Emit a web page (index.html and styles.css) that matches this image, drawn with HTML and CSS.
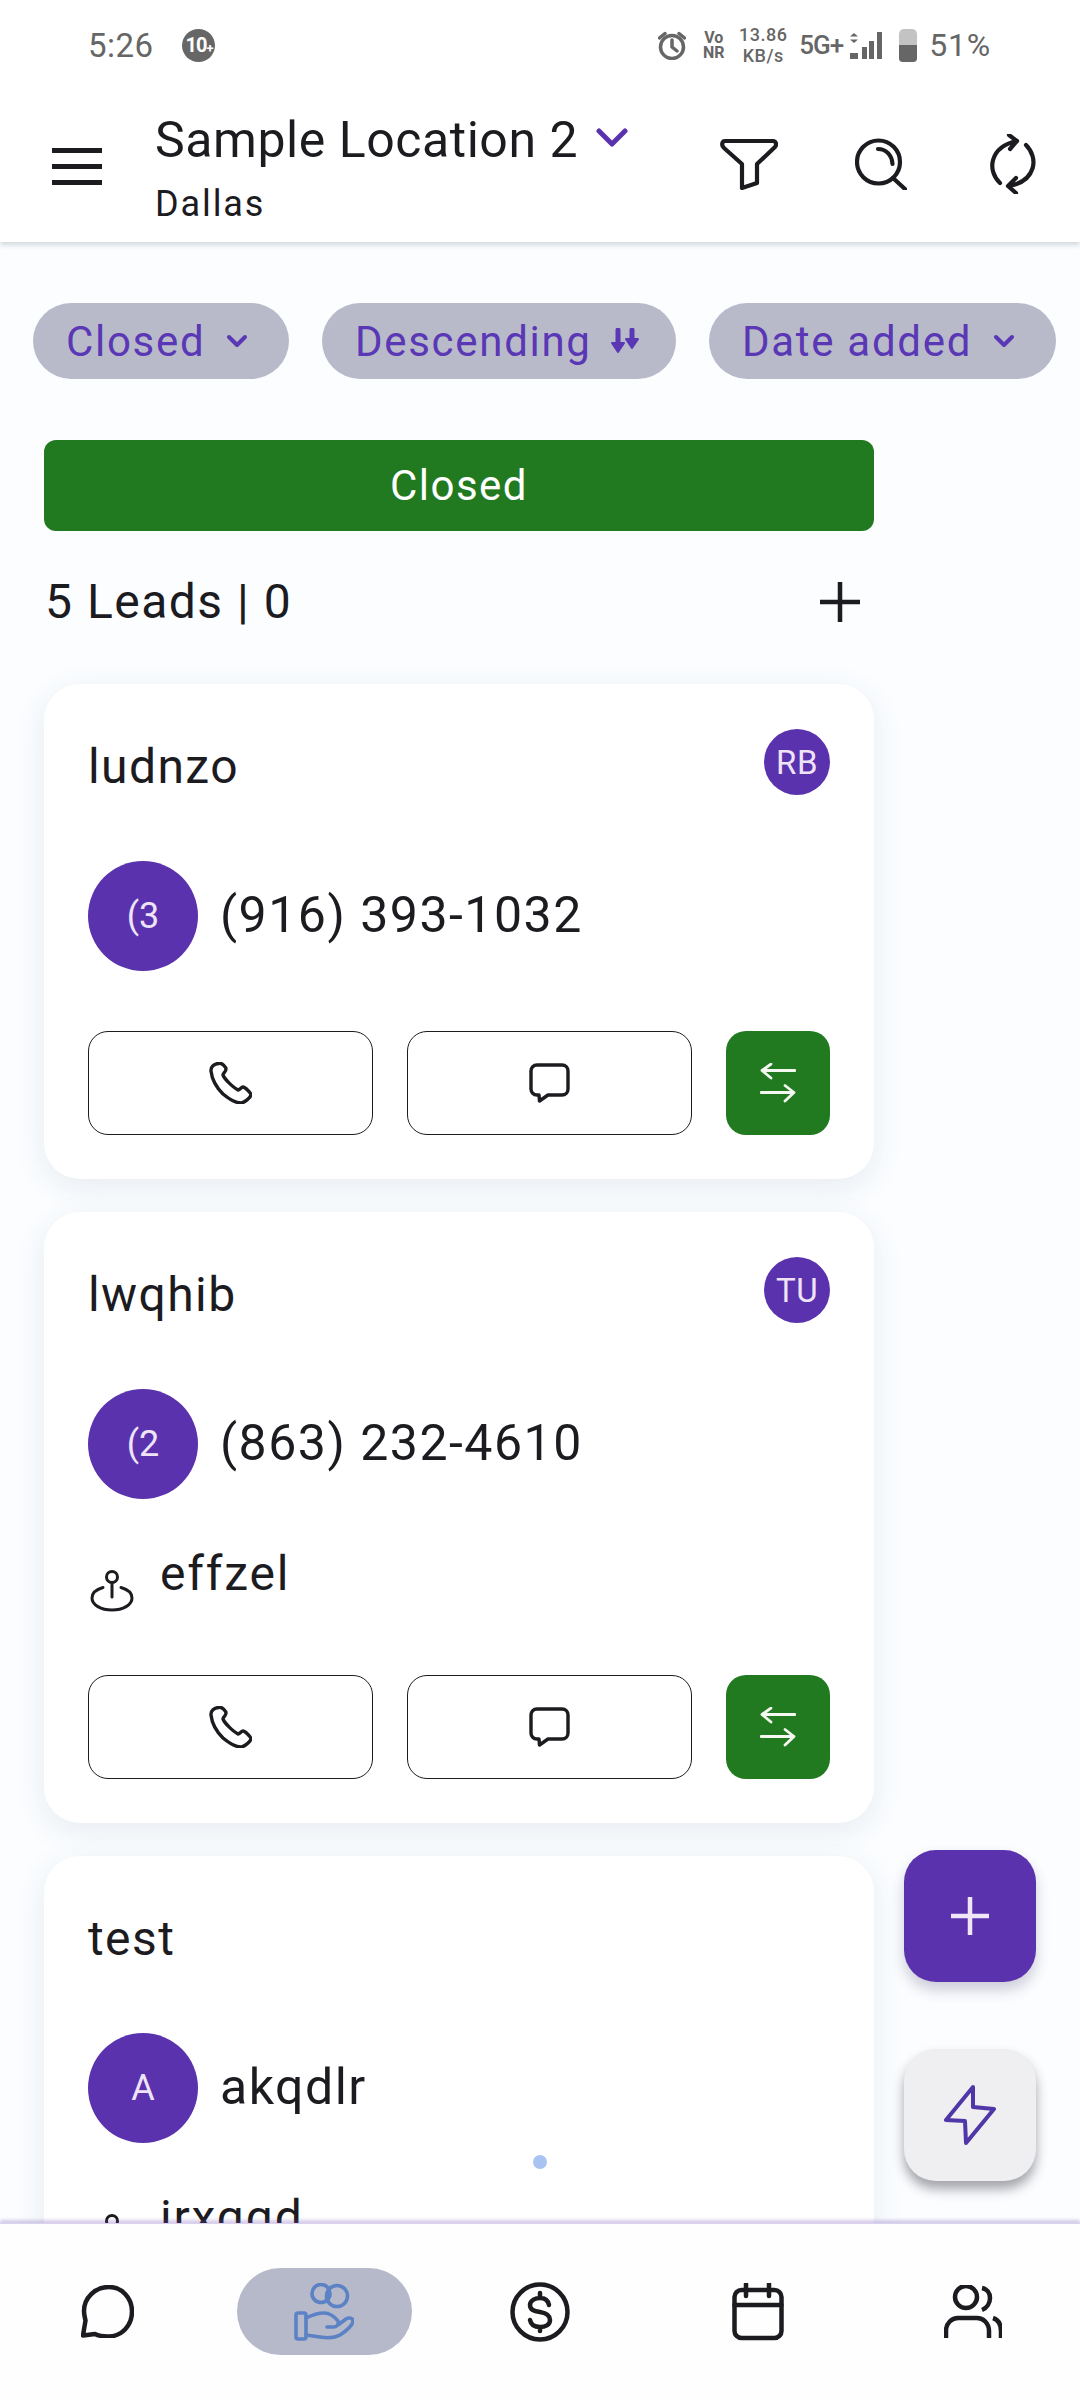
FILE: index.html
```html
<!DOCTYPE html>
<html lang="en">
<head>
<meta charset="utf-8">
<title>Leads</title>
<link rel="stylesheet" href="styles.css">
</head>
<body>
<svg class="defs" width="0" height="0" aria-hidden="true">
  <symbol id="i-phone" viewBox="0 0 43 42"><path d="M10 1.500C5 1.500 1.500 5 2 9c1 9 5 16 12 23 6 5 13 9 18 9 3 0 9-5 10-8 0-2-6-8-8-8-2 0-3 3-5 3-4-2-13-10-15-15 0-2 3-3 3-6 0-2-4-6-7-6z"/></symbol>
  <symbol id="i-msg" viewBox="0 0 41 40"><path d="M8 2h25c3.500 0 6 2.500 6 6v18c0 3.500-2.500 6-6 6H19l-8.500 6-.5-6H8c-3.500 0-6-2.500-6-6V8c0-3.500 2.500-6 6-6z"/></symbol>
  <symbol id="i-swap" viewBox="0 0 36 40"><path d="M35 7.500H2M11 1 2 7.500 11 15M1 29.500h33M25 22.500l9 7-9 8.500"/></symbol>
  <symbol id="i-pin" viewBox="0 0 44 42"><circle cx="22" cy="7" r="5.500"/><path d="M22 12.500V27M13 17.500C6 19.500 2 23.500 2 28c0 7 9 12 20 12s20-5 20-12c0-4.500-4-8.500-11-10.500"/></symbol>
</svg>

<div class="app">
  <header class="top">
    <div class="status">
      <div class="status-left">
        <span class="clock">5:26</span>
        <span class="badge">10<span class="badge-plus">+</span></span>
      </div>
      <div class="status-right">
        <svg class="st-alarm" viewBox="0 0 28 29"><circle cx="14" cy="16" r="11.500"/><path d="M14 9v7l5 4M1.500 7 7 2.500M26.500 7 21 2.500"/></svg>
        <span class="st-vo"><span>Vo</span><span>NR</span></span>
        <span class="st-speed"><span>13.86</span><span>KB/s</span></span>
        <span class="st-5g">5G+</span>
        <svg class="st-signal" viewBox="0 0 33 27"><path class="fill" d="M1 4.500 5 1l4 3.500zM1 7.500h8L5 11zM1 21h8v6H1zM13 15h5v12h-5zM20 9h5v18h-5zM28 0h5v27h-5z"/></svg>
        <span class="st-batt"><span class="st-batt-fill"></span></span>
        <span class="st-pct">51%</span>
      </div>
    </div>
    <div class="appbar">
      <div class="burger"><span></span><span></span><span></span></div>
      <div class="loc">
        <div class="loc-name">Sample Location 2
          <svg class="loc-chev" viewBox="0 0 32 20"><path d="M3 3l13 13L29 3"/></svg>
        </div>
        <div class="loc-city">Dallas</div>
      </div>
      <div class="bar-actions">
        <svg class="ic-filter" viewBox="0 0 58 52"><path d="M5 3h48c3 0 4 3.500 2 6L37 26v19l-15 5V26L4 10C1 7.500 2 3 5 3z"/></svg>
        <svg class="ic-search" viewBox="0 0 52 52"><circle cx="23.500" cy="24" r="21.500"/><path d="M38 40l12 11M23 11c8 0 14 6 14.500 15"/></svg>
        <svg class="ic-refresh" viewBox="0 0 56 60"><path d="M15 49C2 37 4 13 32 7M24 1l8 6-7 8M41 11c13 13 10 36-17 41M31 44l-8 8 8 7"/></svg>
      </div>
    </div>
  </header>

  <main class="content">
    <div class="pills">
      <div class="pill pill-a">Closed
        <svg class="pill-chev" viewBox="0 0 22 14"><path d="M3 3l8 8 8-8"/></svg>
      </div>
      <div class="pill pill-b">Descending
        <svg class="pill-sort" viewBox="0 0 29 27"><path d="M8 2v16M22 2v12"/><path class="sort-head" d="M2 15h12l-6 9zM16 11h12l-6 9z"/></svg>
      </div>
      <div class="pill pill-c">Date added
        <svg class="pill-chev" viewBox="0 0 22 14"><path d="M3 3l8 8 8-8"/></svg>
      </div>
    </div>

    <div class="column">
      <div class="col-head">Closed</div>
      <div class="col-count">
        <span>5 Leads | 0</span>
        <svg class="col-plus" viewBox="0 0 40 40"><path d="M20 0v40M0 20h40"/></svg>
      </div>

      <article class="card">
        <div class="card-top"><span class="card-name">ludnzo</span><span class="mini-av">RB</span></div>
        <div class="contact"><span class="big-av">(3</span><span class="contact-text">(916) 393-1032</span></div>
        <div class="actions">
          <button class="act"><svg class="act-phone"><use href="#i-phone"/></svg></button>
          <button class="act"><svg class="act-msg"><use href="#i-msg"/></svg></button>
          <button class="act-green"><svg class="act-swap"><use href="#i-swap"/></svg></button>
        </div>
      </article>

      <article class="card">
        <div class="card-top"><span class="card-name">lwqhib</span><span class="mini-av">TU</span></div>
        <div class="contact"><span class="big-av">(2</span><span class="contact-text">(863) 232-4610</span></div>
        <div class="place"><svg class="pin"><use href="#i-pin"/></svg><span class="place-text">effzel</span></div>
        <div class="actions">
          <button class="act"><svg class="act-phone"><use href="#i-phone"/></svg></button>
          <button class="act"><svg class="act-msg"><use href="#i-msg"/></svg></button>
          <button class="act-green"><svg class="act-swap"><use href="#i-swap"/></svg></button>
        </div>
      </article>

      <article class="card">
        <div class="card-top"><span class="card-name">test</span></div>
        <div class="contact"><span class="big-av">A</span><span class="contact-text">akqdlr</span></div>
        <div class="place"><svg class="pin"><use href="#i-pin"/></svg><span class="place-text">irxqqd</span></div>
      </article>
    </div>

    <span class="scroll-dot"></span>
    <button class="fab fab-add"><svg viewBox="0 0 38 38"><path d="M19 0v38M0 19h38"/></svg></button>
    <button class="fab fab-bolt"><svg viewBox="0 0 52 60"><path d="M29 2 2 35l19 1 1 22 28-34-21-2z"/></svg></button>
  </main>

  <nav class="nav">
    <div class="nav-item">
      <svg class="nv-chat" viewBox="0 0 53 53"><path d="M28 2C14 2 3 13 3 26c0 4 1 7 1.500 9.500L2 50.500 14 49c4 2 8 2.500 13 2.500 14 0 24-11 24-25C51 13 41 2 28 2z"/></svg>
    </div>
    <div class="nav-item nav-active">
      <svg class="nv-hand" viewBox="0 0 60 58"><circle cx="27" cy="10.500" r="9"/><circle cx="43" cy="13" r="10.500"/><rect x="2" y="30" width="10" height="26" rx="2"/><path d="M12 35c6-3 12-5 18-5 5 0 10 3 14 8 1 3-1 6-4 6h-7M44 42l8-6c3-2 7-1 7 2 0 3-5 9-13 14-7 4-14 3-20 2l-14-2"/></svg>
    </div>
    <div class="nav-item">
      <svg class="nv-dollar" viewBox="0 0 60 60"><circle cx="30" cy="30" r="27.500"/><path d="M39 23c-1-5-5-7-9-7s-10 2-10 7c0 5 4 6 10 7 6 1 10 3 10 8s-5 7-10 7-9-2-10-7M30 11v5M30 45v4"/></svg>
    </div>
    <div class="nav-item">
      <svg class="nv-cal" viewBox="0 0 52 58"><rect x="2.500" y="7" width="47" height="48" rx="7"/><path d="M2.500 22h47M14 1v12M37 1v12"/></svg>
    </div>
    <div class="nav-item">
      <svg class="nv-people" viewBox="0 0 58 54"><circle cx="22" cy="12" r="11"/><path d="M2 53v-7c0-8 6-13 12-13h19c6 0 12 5 12 13v7M38 3c5 1 8 5 8 10s-3 10-8 12M49 33c6 2 8 7 8 13v7"/></svg>
    </div>
  </nav>
</div>
</body>
</html>
```
FILE: styles.css
```css
* { box-sizing: border-box; margin: 0; padding: 0; }
html, body { width: 1080px; height: 2400px; overflow: hidden; background: #fbfdff; }
body { font-family: Roboto, "Liberation Sans", sans-serif; color: #1c1b1f; }
button { border: 0; background: none; font: inherit; }
.defs { position: absolute; }
svg { fill: none; stroke-linecap: round; stroke-linejoin: round; display: block; }

.app { width: 1080px; height: 2400px; display: flex; flex-direction: column; }

/* header */
.top { height: 242px; background: #fff; flex: none; box-shadow: 0 3px 5px rgba(70, 90, 95, .22); position: relative; z-index: 3; }
.status { height: 90px; display: flex; justify-content: space-between; align-items: center; padding: 0 89px 0 88px; color: #666; }
.status-left { display: flex; align-items: center; gap: 28px; }
.clock { font-size: 33px; width: 66px; letter-spacing: .5px; }
.badge { width: 33px; height: 33px; border-radius: 50%; background: #666; color: #fff; font-size: 20px; font-weight: 700; letter-spacing: -1px; display: flex; align-items: center; justify-content: center; padding-left: 2px; }
.badge-plus { font-size: 13px; margin-top: 7px; letter-spacing: 0; }
.status-right { display: flex; align-items: center; }
.st-alarm { width: 28px; height: 29px; stroke: #666; stroke-width: 3.500; margin-right: 15px; }
.st-vo { display: flex; flex-direction: column; align-items: center; width: 25px; margin-right: 12px; font-size: 16px; font-weight: 700; line-height: 15px; }
.st-speed { display: flex; flex-direction: column; align-items: center; width: 50px; margin-right: 11px; font-size: 18px; font-weight: 500; line-height: 21px; letter-spacing: .5px; }
.st-5g { font-size: 26px; width: 44px; margin-right: 6px; font-weight: 500; letter-spacing: -1px; }
.st-signal { width: 33px; height: 27px; margin-right: 17px; }
.st-signal .fill { fill: #666; stroke: none; }
.st-batt { width: 18px; height: 33px; border-radius: 5px 5px 4px 4px; background: #c3c3c3; display: flex; align-items: flex-end; margin-right: 12px; overflow: hidden; }
.st-batt-fill { width: 100%; height: 17px; background: #666; }
.st-pct { font-size: 32px; letter-spacing: .8px; }

.appbar { height: 152px; display: flex; align-items: flex-start; padding-left: 52px; position: relative; }
.burger { width: 50px; margin-top: 58px; display: flex; flex-direction: column; gap: 11px; }
.burger span { height: 5px; background: #1c1b1f; }
.loc { margin-left: 53px; }
.loc-name { font-size: 50px; line-height: 60px; margin-top: 20px; display: flex; align-items: center; letter-spacing: .55px; }
.loc-chev { width: 32px; height: 20px; margin: -4px 0 0 18px; stroke: #5a32ae; stroke-width: 5; }
.loc-city { font-size: 36px; line-height: 44px; margin-top: 12px; letter-spacing: 1.900px; }
.bar-actions { position: absolute; left: 720px; top: 44px; display: flex; align-items: center; }
.bar-actions svg { stroke: #1c1b1f; stroke-width: 4.200; flex: none; }
.ic-filter { width: 58px; height: 52px; margin-right: 77px; }
.ic-search { width: 52px; height: 52px; margin-right: 77px; }
.ic-refresh { width: 58px; height: 60px; }

/* main */
.content { flex: 1; min-height: 0; overflow: hidden; position: relative; }
.pills { display: flex; gap: 33px; padding: 61px 0 0 33px; }
.pill { height: 76px; border-radius: 38px; background: #b8bac9; color: #5a37b5; font-size: 42px; letter-spacing: 1.700px; display: flex; align-items: center; white-space: nowrap; padding-left: 33px; }
.pill-a { width: 256px; }
.pill-b { width: 354px; }
.pill-c { width: 347px; }
.pill-chev { width: 22px; height: 14px; stroke: #5a37b5; stroke-width: 4; margin-left: 21px; }
.pill-sort { width: 29px; height: 27px; stroke: #5a37b5; stroke-width: 5; margin-left: 18px; }
.sort-head { fill: #5a37b5; stroke-width: 2; }

.column { width: 830px; margin: 61px 0 0 44px; }
.col-head { height: 91px; border-radius: 12px; background: #227a20; color: #fff; font-size: 42px; letter-spacing: 1.500px; display: flex; align-items: center; justify-content: center; }
.col-count { display: flex; justify-content: space-between; align-items: center; height: 60px; margin-top: 40px; padding: 0 14px 0 1px; font-size: 48px; letter-spacing: 1.500px; }
.col-plus { width: 40px; height: 40px; stroke: #1c1b1f; stroke-width: 4.500; margin-top: 1px; }
.col-plus path { stroke-linecap: butt; }

.card { background: #fff; border-radius: 36px; padding: 45px 44px 44px; margin-bottom: 33px; box-shadow: 0 8px 30px rgba(60, 85, 120, .1); }
.col-count + .card { margin-top: 53px; }
.card-top { display: flex; justify-content: space-between; align-items: center; height: 66px; }
.card-name { font-size: 48px; letter-spacing: 1.400px; margin: 9px 0 0; }
.mini-av { width: 66px; height: 66px; border-radius: 50%; background: #5a32ae; color: #efe3f7; font-size: 33px; display: flex; align-items: center; justify-content: center; letter-spacing: .5px; }
.contact { display: flex; align-items: center; gap: 22px; height: 110px; margin-top: 66px; }
.big-av { width: 110px; height: 110px; border-radius: 50%; background: #5a32ae; color: #efe3f7; font-size: 36px; display: flex; align-items: center; justify-content: center; flex: none; }
.contact-text { font-size: 50px; letter-spacing: 1.500px; margin-top: -2px; }
.place { display: flex; align-items: flex-start; height: 56px; margin-top: 60px; }
.pin { width: 44px; height: 42px; margin: 11px 0 0 2px; stroke: #1c1b1f; stroke-width: 3; flex: none; }
.place-text { font-size: 48px; line-height: 30px; letter-spacing: 1.800px; margin-left: 26px; }
.actions { display: flex; gap: 34px; margin-top: 60px; height: 104px; }
.act { width: 285px; border: 1.500px solid #1c1b1f; border-radius: 20px; background: #fff; display: flex; align-items: center; justify-content: center; }
.act-phone { width: 43px; height: 42px; stroke: #1c1b1f; stroke-width: 3.400; }
.act-msg { width: 41px; height: 40px; stroke: #1c1b1f; stroke-width: 3.400; }
.act-green { width: 104px; border-radius: 20px; background: #227a20; display: flex; align-items: center; justify-content: center; }
.act-swap { width: 36px; height: 40px; stroke: #f4f8f1; stroke-width: 2.800; }

.scroll-dot { position: absolute; left: 533px; top: 1913px; width: 14px; height: 14px; border-radius: 50%; background: #a9c3f3; }
.fab { position: absolute; left: 904px; width: 132px; height: 132px; border-radius: 32px; display: flex; align-items: center; justify-content: center; }
.fab-add { top: 1608px; background: #5a32ae; box-shadow: 0 8px 14px rgba(60, 50, 90, .24); }
.fab-add svg { width: 38px; height: 38px; stroke: #f1e6f8; stroke-width: 4.500; }
.fab-add path { stroke-linecap: butt; }
.fab-bolt { top: 1807px; background: #efeef0; box-shadow: 0 8px 12px rgba(40, 40, 50, .42); }
.fab-bolt svg { width: 52px; height: 60px; stroke: #4f37a8; stroke-width: 4; }

/* nav */
.nav { height: 177px; flex: none; background: #fefefe; border-top: 1px solid #dcd2ee; box-shadow: 0 -3px 3px rgba(110, 80, 180, .28); position: relative; z-index: 2; display: grid; grid-template-columns: repeat(5, 216px); justify-items: center; align-items: start; padding-top: 44px; }
.nav-item { height: 87px; display: flex; align-items: center; justify-content: center; }
.nav-item svg { stroke: #1c1b1f; stroke-width: 4.500; }
.nav-active { width: 175px; border-radius: 44px; background: #b5b9c9; }
.nav-active svg { stroke: #5c82c6; stroke-width: 3.600; }
.nv-chat { width: 53px; height: 53px; margin-left: -1px; }
.nv-hand { width: 60px; height: 58px; margin-left: 0; }
.nv-dollar { width: 60px; height: 60px; }
.nv-cal { width: 52px; height: 58px; margin-left: 3px; }
.nv-people { width: 58px; height: 54px; margin-left: 2px; }
.nv-people path { stroke-linecap: butt; }
```
